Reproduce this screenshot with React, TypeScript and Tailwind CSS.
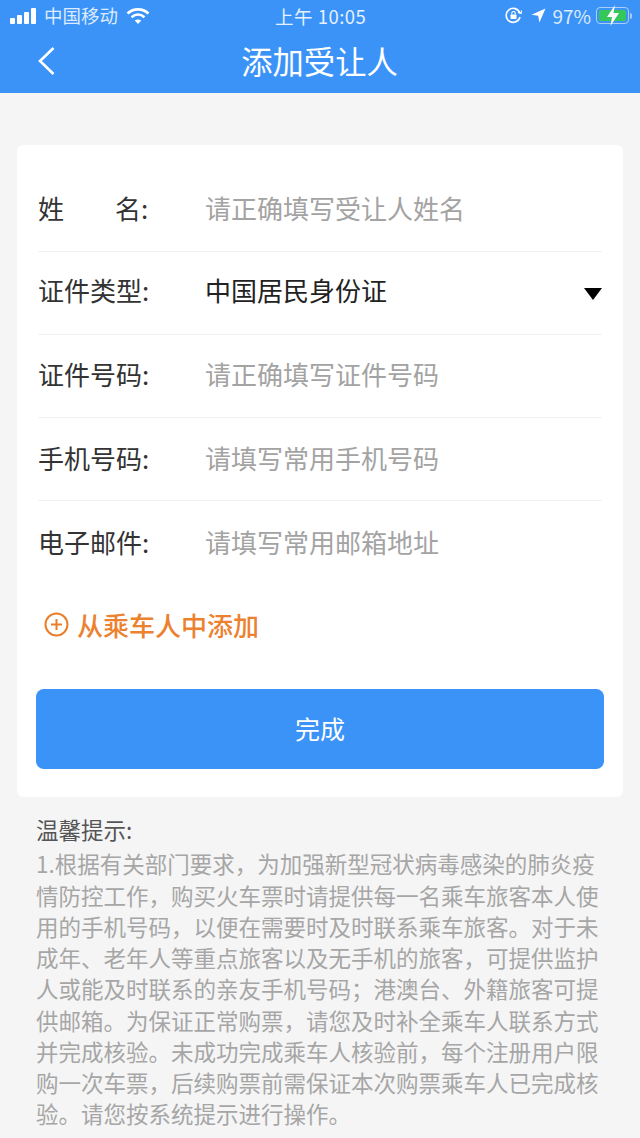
const CJK = "font-['Noto_Sans_CJK_SC','Noto_Sans',sans-serif]"

const ROWS = [
  { label: '证件类型:', value: '中国居民身份证', select: true },
  { label: '证件号码:', value: '请正确填写证件号码' },
  { label: '手机号码:', value: '请填写常用手机号码' },
  { label: '电子邮件:', value: '请填写常用邮箱地址' },
]

const TIPS = [
  '1.根据有关部门要求，为加强新型冠状病毒感染的肺炎疫',
  '情防控工作，购买火车票时请提供每一名乘车旅客本人使',
  '用的手机号码，以便在需要时及时联系乘车旅客。对于未',
  '成年、老年人等重点旅客以及无手机的旅客，可提供监护',
  '人或能及时联系的亲友手机号码；港澳台、外籍旅客可提',
  '供邮箱。为保证正常购票，请您及时补全乘车人联系方式',
  '并完成核验。未成功完成乘车人核验前，每个注册用户限',
  '购一次车票，后续购票前需保证本次购票乘车人已完成核',
  '验。请您按系统提示进行操作。',
]

function StatusBar() {
  return (
    <div className="relative flex h-[31px] items-center justify-between pl-[10px] pr-[8px] text-white">
      <div className="flex items-center">
        <svg width="27" height="16" viewBox="0 0 27 16" fill="white">
          <rect x="0" y="10" width="5" height="6" rx="1" />
          <rect x="7" y="7" width="5" height="9" rx="1" />
          <rect x="14" y="4" width="5" height="12" rx="1" />
          <rect x="21" y="0" width="5" height="16" rx="1" />
        </svg>
        <span className="ml-[7px] text-[18.5px] leading-none text-[#dcebff]">中国移动</span>
        <svg className="ml-[8px]" width="24" height="18" viewBox="0 0 24 18" fill="none" stroke="white" strokeWidth="2.6">
          <path d="M1.5 6.5C7.5 1 16.5 1 22.5 6.5" />
          <path d="M5.5 10.2C9.5 6.8 14.5 6.8 18.5 10.2" />
          <path d="M12 17L8.7 13.6C10.6 12 13.4 12 15.3 13.6Z" fill="white" stroke="none" />
        </svg>
      </div>
      <span className="absolute left-[275px] top-[4px] text-[18.5px] leading-[24px] tracking-[0.5px] text-[#e6f1ff]">上午 10:05</span>
      <div className="flex items-center">
        <svg width="17" height="17" viewBox="0 0 17 17" fill="none" stroke="white" strokeWidth="1.6">
          <path d="M14.8 6A7 7 0 1 0 15 10" />
          <path d="M13 5.5L16 6.5L16.5 3.5" strokeWidth="1.2" />
          <rect x="5.5" y="7.5" width="6" height="4.5" rx="0.8" fill="white" stroke="none" />
          <path d="M6.8 7.5V6.2a1.7 1.7 0 0 1 3.4 0V7.5" strokeWidth="1.1" />
        </svg>
        <svg className="ml-[9px]" width="15" height="15" viewBox="0 0 15 15" fill="white">
          <path d="M14.5 0.5L0.5 6.8L7.2 7.8L8.4 14.5Z" />
        </svg>
        <span className="ml-[6px] text-[19px] leading-none text-[#dcebff]">97%</span>
        <div className="relative ml-[5px] h-[17px] w-[33px] rounded-[4px] border border-[#a9cdf7] p-[2px]">
          <div className="h-full w-full rounded-[2px] bg-[#35c759]" />
          <svg className="absolute left-[10px] top-[-3px]" width="12" height="21" viewBox="0 0 12 21" fill="white">
            <path d="M8 0L0 12H5L3.5 21L12 8H6.5Z" />
          </svg>
        </div>
        <div className="ml-[1px] h-[6px] w-[2px] rounded-r-sm bg-[#a9cdf7]" />
      </div>
    </div>
  )
}

function Row({ label, value, select, last }: { label: string; value: string; select?: boolean; last?: boolean }) {
  return (
    <div className={`flex h-[83.3px] items-center ${select ? 'pb-[6px]' : 'pb-[4px]'} ${last ? '' : 'border-b border-[#f1f1f1]'}`}>
      <span className="w-[167px] text-[26px] text-[#333]">{label}</span>
      <span className={`flex-1 text-[26px] ${select ? 'text-[#222]' : 'text-[#a3a3a3]'}`}>{value}</span>
      {select && <div className="mt-[9px] h-0 w-0 border-x-[9px] border-t-[12px] border-x-transparent border-t-black" />}
    </div>
  )
}

export default function App() {
  return (
    <div className={`${CJK} h-[1138px] w-[640px] overflow-hidden bg-[#f5f5f5]`}>
      <div className="h-[93px] bg-[#3b93f7]">
        <StatusBar />
        <div className="relative flex h-[62px] items-center justify-center pb-[3px] text-[31px] leading-none text-white">
          <svg className="absolute left-[37px] top-[15px]" width="19" height="30" viewBox="0 0 19 30" fill="none" stroke="white" strokeWidth="2.6">
            <path d="M16.5 2L3 15L16.5 28" />
          </svg>
          <span className="-ml-[1px] text-[31.3px]">添加受让人</span>
        </div>
      </div>

      <div className="mx-[17px] mt-[52px] h-[652px] rounded-[6px] bg-white px-[21px] pt-[23px]">
        <div className="flex h-[83.5px] items-center border-b border-[#f1f1f1] pb-[3px]">
          <span className="flex w-[167px] text-[26px] text-[#333]">
            <span className="w-[77px]">姓</span>名:
          </span>
          <span className="text-[26px] text-[#a3a3a3]">请正确填写受让人姓名</span>
        </div>
        {ROWS.map((row, i) => (
          <Row key={row.label} {...row} last={i === ROWS.length - 1} />
        ))}
        <div className="flex h-[83px] items-center pb-[4px] pl-[6px]">
          <svg width="25" height="25" viewBox="0 0 25 25" fill="none" stroke="#e97f2c" strokeWidth="2" className="mt-[1px]">
            <circle cx="12.5" cy="12.5" r="11" />
            <path d="M7 12.5H18M12.5 7V18" />
          </svg>
          <span className="ml-[8px] text-[26px] font-medium text-[#ec8130]">从乘车人中添加</span>
        </div>
        <div className="-mx-[2px] mt-[21px] flex h-[80px] items-center justify-center rounded-[8px] bg-[#3b93f7] text-[25px] text-white">
          完成
        </div>
      </div>

      <div className="mt-[17px] pl-[36px] text-[22.5px] leading-[31.25px]">
        <div className="mb-[3px] text-[#555]">温馨提示:</div>
        {TIPS.map((line) => (
          <div key={line} className="whitespace-nowrap text-[#a6a6a6]">{line}</div>
        ))}
      </div>
    </div>
  )
}
